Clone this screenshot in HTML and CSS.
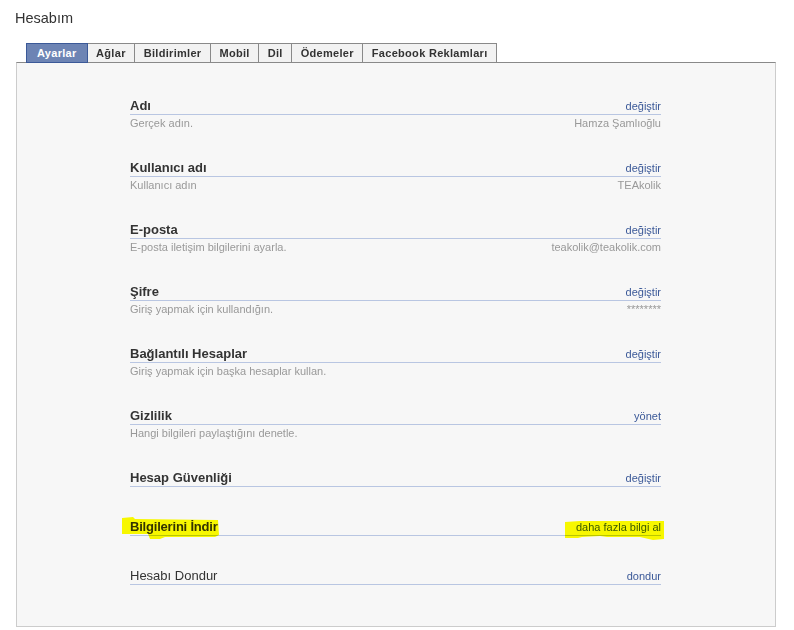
FILE: index.html
```html
<!DOCTYPE html>
<html lang="tr">
<head>
<meta charset="utf-8">
<title>Hesabım</title>
<link rel="stylesheet" href="styles.css">
</head>
<body>
<div class="page">
  <h1 class="page-title">Hesabım</h1>
  <ul class="tabs">
    <li class="tab tab-active">Ayarlar</li>
    <li class="tab">Ağlar</li>
    <li class="tab">Bildirimler</li>
    <li class="tab">Mobil</li>
    <li class="tab">Dil</li>
    <li class="tab">Ödemeler</li>
    <li class="tab">Facebook Reklamları</li>
  </ul>
  <div class="panel">
    <div class="row">
      <div class="head"><span class="label">Adı</span><a class="action">değiştir</a></div>
      <div class="desc"><span>Gerçek adın.</span><span>Hamza Şamlıoğlu</span></div>
    </div>
    <div class="row">
      <div class="head"><span class="label">Kullanıcı adı</span><a class="action">değiştir</a></div>
      <div class="desc"><span>Kullanıcı adın</span><span>TEAkolik</span></div>
    </div>
    <div class="row">
      <div class="head"><span class="label">E-posta</span><a class="action">değiştir</a></div>
      <div class="desc"><span>E-posta iletişim bilgilerini ayarla.</span><span>teakolik@teakolik.com</span></div>
    </div>
    <div class="row">
      <div class="head"><span class="label">Şifre</span><a class="action">değiştir</a></div>
      <div class="desc"><span>Giriş yapmak için kullandığın.</span><span>********</span></div>
    </div>
    <div class="row">
      <div class="head"><span class="label">Bağlantılı Hesaplar</span><a class="action">değiştir</a></div>
      <div class="desc"><span>Giriş yapmak için başka hesaplar kullan.</span><span></span></div>
    </div>
    <div class="row">
      <div class="head"><span class="label">Gizlilik</span><a class="action">yönet</a></div>
      <div class="desc"><span>Hangi bilgileri paylaştığını denetle.</span><span></span></div>
    </div>
    <div class="row">
      <div class="head"><span class="label">Hesap Güvenliği</span><a class="action">değiştir</a></div>
    </div>
    <div class="row">
      <div class="head">
        <span class="label label-tight">Bilgilerini İndir</span><a class="action">daha fazla bilgi al</a>
        <svg class="mark mark-left" width="102" height="26" viewBox="0 0 102 26"><polygon points="2,3 13,2 15,4 98,5 99,20 95,22 45,22 40,24 30,24 28,19 2,19"/></svg>
        <svg class="mark mark-right" width="104" height="26" viewBox="0 0 104 26"><polygon points="4,7 19,6 103,6 103,24 92,25 79,22 46,22 39,21 21,22 17,23 4,23"/></svg>
      </div>
    </div>
    <div class="row">
      <div class="head"><span class="label label-plain">Hesabı Dondur</span><a class="action">dondur</a></div>
    </div>
  </div>
</div>
</body>
</html>
```
FILE: styles.css
```css
html, body {
  margin: 0;
  padding: 0;
  background: #ffffff;
}
body {
  font-family: Tahoma, "Liberation Sans", Arial, sans-serif;
  color: #333333;
}
.page {
  padding: 10px 18px 0 16px;
}
.page-title {
  margin: 0 0 16px -1px;
  font-size: 14.5px;
  line-height: 17px;
  font-weight: normal;
  color: #333333;
}
.tabs {
  list-style: none;
  margin: 0 0 -1px 10px;
  padding: 0;
  display: flex;
}
.tab {
  position: relative;
  margin-left: -1px;
  padding: 0 8.5px;
  height: 18px;
  line-height: 18px;
  font-size: 11px;
  font-weight: bold;
  letter-spacing: 0.3px;
  color: #333333;
  background: #f2f2f2;
  border: 1px solid #898989;
}
.tab:first-child {
  margin-left: 0;
}
.tab-active {
  z-index: 1;
  color: #ffffff;
  background: #6d84b4;
  border-color: #3b5998;
  padding: 0 10px;
}
.panel {
  width: 531px;
  padding: 35px 114px 9px 113px;
  background: #f7f7f7;
  border: 1px solid #cccccc;
  border-top-color: #898989;
}
.row {
  margin-bottom: 32px;
}
.head {
  position: relative;
  display: flex;
  justify-content: space-between;
  align-items: baseline;
  height: 16px;
  line-height: 16px;
  border-bottom: 1px solid #b9c6e2;
}
.label {
  font-size: 13px;
  font-weight: bold;
  color: #333333;
}
.label-tight {
  letter-spacing: -0.2px;
}
.label-plain {
  font-weight: normal;
  color: #333333;
}
.action {
  font-size: 11px;
  color: #3b5998;
  text-decoration: none;
}
.desc {
  display: flex;
  justify-content: space-between;
  margin-top: 3px;
  height: 10px;
  line-height: 11px;
  font-size: 11px;
  color: #999999;
}
.mark {
  position: absolute;
  top: -4px;
  mix-blend-mode: multiply;
  pointer-events: none;
}
.mark polygon {
  fill: #ffff00;
}
.mark-left {
  left: -10px;
}
.mark-right {
  right: -4px;
}
```
